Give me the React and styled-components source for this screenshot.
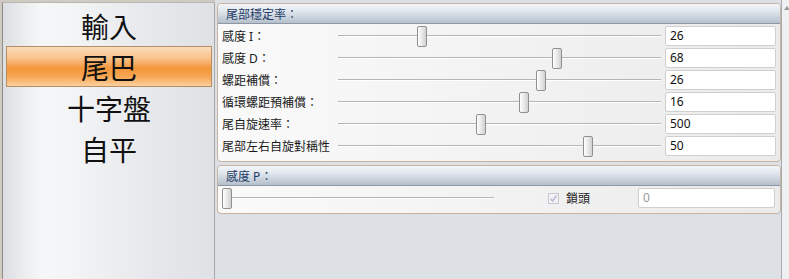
import styled, { createGlobalStyle } from "styled-components";

const GlobalStyle = createGlobalStyle`
  html, body {
    margin: 0;
    padding: 0;
    background: #dfe2e6;
  }
  #root {
    width: 789px;
    height: 279px;
    overflow: hidden;
  }
`;

const FONT = `"Noto Sans", "Noto Sans CJK TC", sans-serif`;

const Page = styled.div`
  display: flex;
  width: 789px;
  height: 279px;
  font-family: ${FONT};
  color: #1a1a1a;
`;

const Sidebar = styled.div`
  width: 215px;
  flex-shrink: 0;
  padding: 2px 0 0 2px;
  box-sizing: border-box;
  background: #cfcbc3;
  display: flex;
`;

const SidePanel = styled.div`
  flex: 1;
  border-left: 1px solid #8f8d86;
  border-top: 1px solid #b9b7b0;
  border-right: 1px solid #a9a9a6;
  background: linear-gradient(
    to right,
    #dcdfe2 0%,
    #f6f7f8 18%,
    #f4f5f6 30%,
    #e6e8eb 70%,
    #dfe2e5 100%
  );
  padding: 2px 2px 0 3px;
  display: flex;
  flex-direction: column;
`;

const NavItem = styled.div`
  height: 41px;
  box-sizing: border-box;
  display: flex;
  align-items: center;
  justify-content: center;
  font-family: "Noto Sans CJK TC", sans-serif;
  font-size: 28px;
  color: #111;
  border: 1px solid ${(p) => (p.$active ? "#b98d62" : "transparent")};
  background: ${(p) =>
    p.$active
      ? "linear-gradient(to bottom, #fcdcbc 0%, #f9c48e 28%, #f4963a 55%, #f6a552 75%, #fbcf9f 100%)"
      : "transparent"};
`;

const Main = styled.div`
  flex: 1;
  display: flex;
  background: #dde0e4;
`;

const Content = styled.div`
  flex: 1;
  padding: 3px 0 0 2px;
  display: flex;
  flex-direction: column;
  gap: 3px;
  border-right: 1px solid #a9abae;
`;

const ScrollBar = styled.div`
  width: 8px;
  background: #eff0f1;
  position: relative;

  &::before {
    content: "";
    position: absolute;
    top: 6px;
    left: 2px;
    border-left: 3px solid transparent;
    border-right: 3px solid transparent;
    border-bottom: 4px solid #9a9a9a;
  }
`;

const Group = styled.div`
  border: 1px solid #c7b39f;
  border-radius: 4px;
  background: linear-gradient(to right, #fafafa, #f1f1f1 60%, #ebebeb);
  overflow: hidden;
`;

const GroupHeader = styled.div`
  height: 20px;
  box-sizing: border-box;
  padding-left: 8px;
  display: flex;
  align-items: center;
  font-size: 12px;
  color: #1e3a66;
  border-bottom: 1px solid #8e98a4;
  border-top-left-radius: 4px;
  background: linear-gradient(
    to bottom,
    #f3f6f9 0%,
    #e2e8ee 35%,
    #c9d2dc 70%,
    #b6c0cc 100%
  );
`;

const Rows = styled.div`
  padding: 1px 4px 4px 4px;
`;

const Row = styled.div`
  display: grid;
  grid-template-columns: 112px 323px 111px;
  column-gap: 4px;
  height: 22px;
  align-items: center;
`;

const Label = styled.div`
  font-size: 12px;
  white-space: nowrap;
  color: #1a1a1a;
`;

const Slider = styled.div`
  position: relative;
  height: 21px;
  width: ${(p) => p.$width || 323}px;

  &::before {
    content: "";
    position: absolute;
    left: 0;
    right: 0;
    top: 9px;
    height: 1px;
    background: #b5b5b5;
    border-bottom: 1px solid #ffffff;
  }
`;

const Thumb = styled.div`
  position: absolute;
  top: 0;
  left: ${(p) => p.$left}px;
  width: 10px;
  height: 21px;
  box-sizing: border-box;
  border: 1px solid #8f9090;
  border-radius: 2px;
  background: linear-gradient(to right, #ffffff, #e4e4e4 60%, #d0d0d0);
`;

const TextBox = styled.div`
  height: 20px;
  box-sizing: border-box;
  width: ${(p) => p.$width || 111}px;
  border: 1px solid #cfcfcf;
  border-radius: 2px;
  background: #fff;
  font-family: "Noto Sans", sans-serif;
  font-size: 12px;
  line-height: 18px;
  padding-left: 4px;
  color: ${(p) => (p.$disabled ? "#9a9a9a" : "#111")};
`;

const BottomRow = styled.div`
  display: flex;
  align-items: center;
  height: 22px;
  padding: 1px 4px 4px 4px;
`;

const CheckWrap = styled.div`
  display: flex;
  align-items: center;
  gap: 7px;
  margin-left: 54px;
  font-size: 12px;
  color: #222;
`;

const CheckBox = styled.div`
  width: 11px;
  height: 11px;
  box-sizing: border-box;
  border: 1px solid #c6c9d0;
  background: #f2f3f5;
  display: flex;
  align-items: center;
  justify-content: center;
`;

const RightBox = styled.div`
  margin-left: auto;
  margin-right: 1px;
`;

const rows = [
  { label: "感度 I：", value: "26", pos: 79 },
  { label: "感度 D：", value: "68", pos: 214 },
  { label: "螺距補償：", value: "26", pos: 198 },
  { label: "循環螺距預補償：", value: "16", pos: 181 },
  { label: "尾自旋速率：", value: "500", pos: 138 },
  { label: "尾部左右自旋對稱性", value: "50", pos: 245 },
];

const navItems = ["輸入", "尾巴", "十字盤", "自平"];

export default function App() {
  return (
    <>
      <GlobalStyle />
      <Page>
        <Sidebar>
          <SidePanel>
            {navItems.map((item) => (
              <NavItem key={item} $active={item === "尾巴"}>
                {item}
              </NavItem>
            ))}
          </SidePanel>
        </Sidebar>
        <Main>
          <Content>
            <Group>
              <GroupHeader>尾部穩定率：</GroupHeader>
              <Rows>
                {rows.map((r) => (
                  <Row key={r.label}>
                    <Label>{r.label}</Label>
                    <Slider>
                      <Thumb $left={r.pos} />
                    </Slider>
                    <TextBox>{r.value}</TextBox>
                  </Row>
                ))}
              </Rows>
            </Group>
            <Group>
              <GroupHeader>感度 P：</GroupHeader>
              <BottomRow>
                <Slider $width={272}>
                  <Thumb $left={0} />
                </Slider>
                <CheckWrap>
                  <CheckBox>
                    <svg width="9" height="9" viewBox="0 0 9 9">
                      <path
                        d="M1.5 4.8 L3.6 7 L7.6 1.6"
                        fill="none"
                        stroke="#c3b8d6"
                        strokeWidth="1.6"
                      />
                    </svg>
                  </CheckBox>
                  鎖頭
                </CheckWrap>
                <RightBox>
                  <TextBox $width={137} $disabled>
                    0
                  </TextBox>
                </RightBox>
              </BottomRow>
            </Group>
          </Content>
          <ScrollBar />
        </Main>
      </Page>
    </>
  );
}
